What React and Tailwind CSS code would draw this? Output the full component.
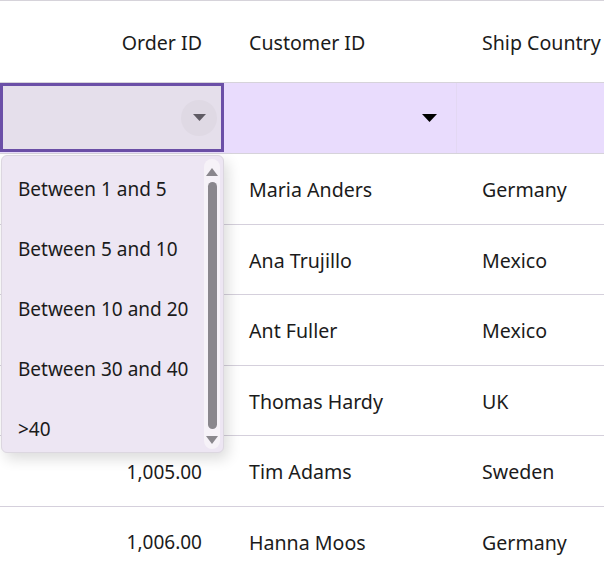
import React from 'react';

const rows = [
    { id: '1,001.00', name: 'Maria Anders', country: 'Germany' },
    { id: '1,002.00', name: 'Ana Trujillo', country: 'Mexico' },
    { id: '1,003.00', name: 'Ant Fuller', country: 'Mexico' },
    { id: '1,004.00', name: 'Thomas Hardy', country: 'UK' },
    { id: '1,005.00', name: 'Tim Adams', country: 'Sweden' },
    { id: '1,006.00', name: 'Hanna Moos', country: 'Germany' },
];

const options = ['Between 1 and 5', 'Between 5 and 10', 'Between 10 and 20', 'Between 30 and 40', '>40'];

const App = () => {
    return (
        <div className="relative w-[604px] h-[567px] overflow-hidden bg-white text-[19.6px] text-[#1b1b1b] font-['Noto_Sans',sans-serif]">
            {/* header */}
            <div className="flex h-[83px] pt-[3px] border-t border-b border-[#d6d3da]">
                <div className="w-[224px] shrink-0 flex items-center justify-end pr-[22px]">Order ID</div>
                <div className="w-[233px] shrink-0 flex items-center pl-[25px]">Customer ID</div>
                <div className="flex-1 flex items-center pl-[25px] whitespace-nowrap">Ship Country</div>
            </div>

            {/* filter row */}
            <div className="flex h-[71px] border-b border-[#d6d3da] bg-[#e9dcfd]">
                <div className="w-[224px] shrink-0 flex items-center justify-end pr-[4px] bg-[#e5dfeb] border-[3px] border-[#6b4fa7] h-[69px]">
                    <div className="w-[36px] h-[36px] rounded-full bg-[#dfd9e4] flex items-center justify-center">
                        <svg width="13" height="7" viewBox="0 0 13 7">
                            <path d="M0 0h13L6.5 7z" fill="#5f5b64" />
                        </svg>
                    </div>
                </div>
                <div className="w-[233px] shrink-0 flex items-center justify-end pr-[19px] border-r border-[#e3d8f3]">
                    <svg width="15" height="8" viewBox="0 0 15 8">
                        <path d="M0 0h15L7.5 8z" fill="#000" />
                    </svg>
                </div>
                <div className="flex-1" />
            </div>

            {/* data rows */}
            {rows.map((r) => (
                <div key={r.id} className="flex h-[70.5px] pt-[2px] border-b border-[#d5d0dc]">
                    <div className="w-[224px] shrink-0 flex items-center justify-end pr-[22px] text-[19px]">{r.id}</div>
                    <div className="w-[233px] shrink-0 flex items-center pl-[25px]">{r.name}</div>
                    <div className="flex-1 flex items-center pl-[25px]">{r.country}</div>
                </div>
            ))}

            {/* dropdown popup */}
            <div className="absolute left-[1px] top-[155px] w-[223px] h-[298px] rounded-[6px] border border-[#dcd7e0] bg-[#ede6f3] shadow-[4px_6px_14px_rgba(0,0,0,0.14)] flex overflow-hidden">
                <div className="flex-1 flex flex-col pt-[3px] text-[19px]">
                    {options.map((o) => (
                        <div key={o} className="h-[60px] shrink-0 flex items-center pl-[16px] whitespace-nowrap">{o}</div>
                    ))}
                </div>
                <div className="w-[16px] my-[3px] mr-[3px] rounded-[8px] bg-[#f6f2f8] flex flex-col items-center">
                    <svg className="mt-[9px]" width="12" height="8" viewBox="0 0 12 8">
                        <path d="M6 0L12 8H0z" fill="#8a878d" />
                    </svg>
                    <div className="w-[9px] flex-1 mt-[6px] mb-[7px] rounded-full bg-[#8a878d]" />
                    <svg className="mb-[5px]" width="12" height="8" viewBox="0 0 12 8">
                        <path d="M0 0h12L6 8z" fill="#8a878d" />
                    </svg>
                </div>
            </div>
        </div>
    );
};

export default App;
